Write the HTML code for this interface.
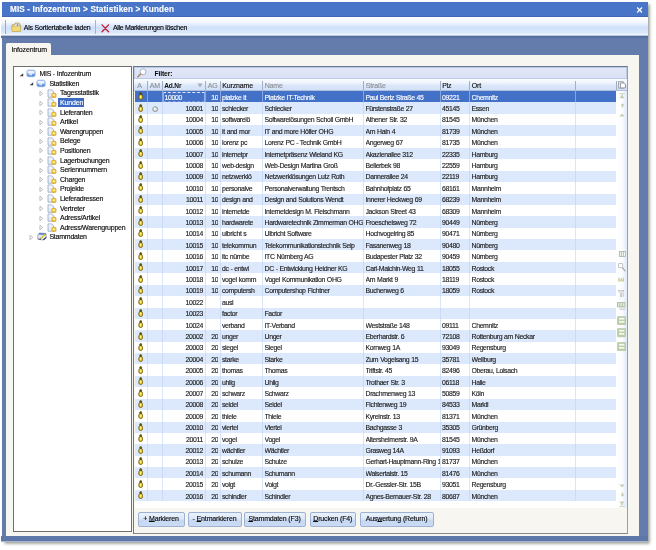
<!DOCTYPE html><html><head><meta charset="utf-8"><title>MIS</title><style>
*{box-sizing:border-box}
html,body{margin:0;padding:0}
body{width:656px;height:550px;background:#fff;overflow:hidden;position:relative;font-family:"Liberation Sans",sans-serif;font-size:7px;color:#0a0a0a;letter-spacing:-0.15px;-webkit-text-stroke-width:0.14px}
.abs{position:absolute}
#win{left:1.6px;top:2.2px;width:646.2px;height:539.6px;background:#637cac;box-shadow:2.2px 2.2px 3px rgba(70,75,60,.6)}
#title{left:1.6px;top:2.2px;width:646.2px;height:14.8px;background:#4875c8;border-bottom:0.6px solid #4068b8}
#title span{position:absolute;left:8.4px;top:2.6px;font-size:8.2px;font-weight:bold;color:#fff;letter-spacing:0.12px;white-space:nowrap;-webkit-text-stroke-width:0.12px}
#tb{left:1.4px;top:17px;width:646.2px;height:19.4px;background:linear-gradient(#fff 0%,#fcfdff 10%,#eff5fe 30%,#d0e0fa 56%,#d9e6fa 78%,#e4edfb 90%,#fff 94%,#fff 96%,#b9c5d9 97%,#b4c0d6 100%)}
#tbsh{left:1.4px;top:36.4px;width:646.4px;height:1.2px;background:#596f9f}
#tab{left:6.4px;top:42.7px;width:44.9px;height:13.4px;background:#f7f6f1;border-radius:1.5px 2px 0 0}
#panel{left:6.4px;top:55.3px;width:632.6px;height:480.6px;background:#f7f6f1}
#tree{left:13px;top:66px;width:119px;height:466px;background:#fff;border:1px solid #6e6e6e}
#grid{left:133px;top:66px;width:494.6px;height:468px;background:#f7f6f1;border:1px solid #6a7892;border-right-color:#8c9fc8;border-bottom-color:#86888c}
.t{position:absolute;white-space:nowrap;line-height:9px;height:9px}
.cell{position:absolute;white-space:nowrap;overflow:hidden;line-height:11px;height:11px;letter-spacing:-0.34px;word-spacing:0.3px;font-size:6.9px;color:#161616}
.r{text-align:right}
.tbt{color:#000;letter-spacing:-0.22px}
.btn{position:absolute;top:512.2px;height:14.7px;border:1px solid #9db1d2;border-radius:2px;background:linear-gradient(#eaf1fc 0%,#dce8f9 45%,#c6d8f3 58%,#cbdbf4 100%);text-align:center;line-height:12.7px;white-space:nowrap}
u{text-decoration-thickness:0.7px;text-underline-offset:0.3px}
</style></head><body>
<div id="root" style="position:absolute;left:0;top:0;width:656px;height:550px;will-change:transform">
<div id="win" class="abs"></div>
<div class="abs" style="left:1.4px;top:536px;width:646.4px;height:4.8px;background:#5e77a9"></div><div class="abs" style="left:1.4px;top:540.8px;width:646.4px;height:1px;background:#a7b5d2"></div>
<div id="title" class="abs"><span>MIS - Infozentrum &gt; Statistiken &gt; Kunden</span></div>
<svg class="abs" style="left:636px;top:6px" width="8" height="8" viewBox="0 0 8 8"><path d="M1.2 1.5 L6 6.5 M6 1.5 L1.2 6.5" stroke="#fff" stroke-width="1.25" fill="none"/></svg>
<div id="tb" class="abs"></div><div id="tbsh" class="abs"></div>
<div class="abs" style="left:5.2px;top:19.6px;width:1px;height:14.6px;background:#9ca8be"></div>
<svg class="abs" style="left:11.2px;top:21.8px" width="10.4" height="10.4" viewBox="0 0 11 11"><path d="M1 4 C1 3.2 1.4 2.8 2.2 2.8 L3.4 2.8 L4.4 1.2 L8.6 1.2 L9.4 2.8 C10 2.9 10.2 3.3 10.2 4 L10.2 9 C10.2 9.8 9.8 10.2 9 10.2 L2.2 10.2 C1.4 10.2 1 9.8 1 9 Z" fill="#efcf60" stroke="#a58a48" stroke-width="0.7"/><path d="M3.6 4.6 L4.6 1.8 L8.2 1.8 L8.8 4.6 Z" fill="#f6f6f2" stroke="#a8a8a0" stroke-width="0.5"/><rect x="6" y="2.4" width="1.6" height="1.8" fill="#8a8a86"/><path d="M1.4 5.4 H9.8 V9 C9.8 9.5 9.5 9.8 9 9.8 H2.2 C1.7 9.8 1.4 9.5 1.4 9 Z" fill="#f3d976"/></svg>
<div class="t tbt" style="left:23.8px;top:22.8px">Als Sortiertabelle laden</div>
<div class="abs" style="left:95.3px;top:20px;width:1px;height:14px;background:#aab4c8"></div>
<svg class="abs" style="left:100.5px;top:24px" width="9" height="8.6" viewBox="0 0 10 10"><path d="M1 1 L8.5 9 M8.5 1 L1 9" stroke="#c4203a" stroke-width="1.6" fill="none" stroke-linecap="round"/></svg>
<div class="t tbt" style="left:113px;top:22.8px;letter-spacing:-0.34px">Alle Markierungen löschen</div>
<div id="tab" class="abs"></div><div class="t" style="left:11.5px;top:44.6px">Infozentrum</div>
<div id="panel" class="abs"></div>
<div id="tree" class="abs"></div>
<svg class="abs" style="left:19.3px;top:71.7px" width="5" height="5" viewBox="0 0 5 5"><path d="M4.2 1.2 L4.2 4.2 L0.6 4.2 Z" fill="#3a3a3a"/></svg>
<svg class="abs" style="left:26.3px;top:69.2px" width="10" height="9" viewBox="0 0 10 9"><rect x="0.6" y="0.9" width="8.8" height="7" rx="2.2" fill="#9dbfee" stroke="#b9c6dc" stroke-width="0.7"/><rect x="1.6" y="2" width="6.8" height="2.4" rx="1.1" fill="#eef4fd"/><path d="M1.2 5.2 h7.6 v1 a1.6 1.6 0 0 1 -1.6 1.4 h-4.4 a1.6 1.6 0 0 1 -1.6 -1.4 Z" fill="#5d8fdc"/><rect x="3.2" y="4.6" width="3" height="1.6" rx="0.7" fill="#e6effc"/></svg>
<div class="t" style="left:39.4px;top:69.2px;letter-spacing:-0.23px">MIS - Infozentrum</div>
<svg class="abs" style="left:29.3px;top:81.3px" width="5" height="5" viewBox="0 0 5 5"><path d="M4.2 1.2 L4.2 4.2 L0.6 4.2 Z" fill="#3a3a3a"/></svg>
<svg class="abs" style="left:36.3px;top:78.79px" width="10" height="9" viewBox="0 0 10 9"><rect x="0.6" y="0.9" width="8.8" height="7" rx="2.2" fill="#9dbfee" stroke="#b9c6dc" stroke-width="0.7"/><rect x="1.6" y="2" width="6.8" height="2.4" rx="1.1" fill="#eef4fd"/><path d="M1.2 5.2 h7.6 v1 a1.6 1.6 0 0 1 -1.6 1.4 h-4.4 a1.6 1.6 0 0 1 -1.6 -1.4 Z" fill="#5d8fdc"/><rect x="3.2" y="4.6" width="3" height="1.6" rx="0.7" fill="#e6effc"/></svg>
<div class="t" style="left:49.4px;top:78.8px;letter-spacing:-0.23px">Statistiken</div>
<svg class="abs" style="left:39.0px;top:89.9px" width="5" height="7" viewBox="0 0 5 7"><path d="M0.9 1.3 L3.8 3.5 L0.9 5.7 Z" fill="#fff" stroke="#a8a0a6" stroke-width="0.7"/></svg>
<svg class="abs" style="left:46.9px;top:88.58px" width="10" height="9" viewBox="0 0 10 9"><path d="M1 0.9 L4.8 0.9 L6.8 2.9 L6.8 8.2 L1 8.2 Z" fill="#e4ecf7" stroke="#8f9db6" stroke-width="0.7"/><path d="M1.8 2 L4.4 2 M1.8 3.4 L5.4 3.4" stroke="#f8fbff" stroke-width="0.8"/><rect x="4.9" y="4.3" width="4.2" height="4.2" rx="0.9" fill="#eec23c" stroke="#c89a20" stroke-width="0.5"/><rect x="5.9" y="5.2" width="2" height="1.9" rx="0.7" fill="#fff6c8"/></svg>
<div class="t" style="left:60.0px;top:88.4px;letter-spacing:-0.23px">Tagesstatistik</div>
<svg class="abs" style="left:39.0px;top:99.5px" width="5" height="7" viewBox="0 0 5 7"><path d="M0.9 1.3 L3.8 3.5 L0.9 5.7 Z" fill="#fff" stroke="#a8a0a6" stroke-width="0.7"/></svg>
<svg class="abs" style="left:46.9px;top:98.17px" width="10" height="9" viewBox="0 0 10 9"><path d="M1 0.9 L4.8 0.9 L6.8 2.9 L6.8 8.2 L1 8.2 Z" fill="#e4ecf7" stroke="#8f9db6" stroke-width="0.7"/><path d="M1.8 2 L4.4 2 M1.8 3.4 L5.4 3.4" stroke="#f8fbff" stroke-width="0.8"/><rect x="4.9" y="4.3" width="4.2" height="4.2" rx="0.9" fill="#eec23c" stroke="#c89a20" stroke-width="0.5"/><rect x="5.9" y="5.2" width="2" height="1.9" rx="0.7" fill="#fff6c8"/></svg>
<div class="abs" style="left:58.4px;top:97.6px;width:25.4px;height:9.4px;background:#3c69c2"></div>
<div class="t" style="left:60.0px;top:98.0px;color:#fff">Kunden</div>
<svg class="abs" style="left:39.0px;top:109.1px" width="5" height="7" viewBox="0 0 5 7"><path d="M0.9 1.3 L3.8 3.5 L0.9 5.7 Z" fill="#fff" stroke="#a8a0a6" stroke-width="0.7"/></svg>
<svg class="abs" style="left:46.9px;top:107.76px" width="10" height="9" viewBox="0 0 10 9"><path d="M1 0.9 L4.8 0.9 L6.8 2.9 L6.8 8.2 L1 8.2 Z" fill="#e4ecf7" stroke="#8f9db6" stroke-width="0.7"/><path d="M1.8 2 L4.4 2 M1.8 3.4 L5.4 3.4" stroke="#f8fbff" stroke-width="0.8"/><rect x="4.9" y="4.3" width="4.2" height="4.2" rx="0.9" fill="#eec23c" stroke="#c89a20" stroke-width="0.5"/><rect x="5.9" y="5.2" width="2" height="1.9" rx="0.7" fill="#fff6c8"/></svg>
<div class="t" style="left:60.0px;top:107.6px;letter-spacing:-0.23px">Lieferanten</div>
<svg class="abs" style="left:39.0px;top:118.7px" width="5" height="7" viewBox="0 0 5 7"><path d="M0.9 1.3 L3.8 3.5 L0.9 5.7 Z" fill="#fff" stroke="#a8a0a6" stroke-width="0.7"/></svg>
<svg class="abs" style="left:46.9px;top:117.35000000000001px" width="10" height="9" viewBox="0 0 10 9"><path d="M1 0.9 L4.8 0.9 L6.8 2.9 L6.8 8.2 L1 8.2 Z" fill="#e4ecf7" stroke="#8f9db6" stroke-width="0.7"/><path d="M1.8 2 L4.4 2 M1.8 3.4 L5.4 3.4" stroke="#f8fbff" stroke-width="0.8"/><rect x="4.9" y="4.3" width="4.2" height="4.2" rx="0.9" fill="#eec23c" stroke="#c89a20" stroke-width="0.5"/><rect x="5.9" y="5.2" width="2" height="1.9" rx="0.7" fill="#fff6c8"/></svg>
<div class="t" style="left:60.0px;top:117.2px;letter-spacing:-0.23px">Artikel</div>
<svg class="abs" style="left:39.0px;top:128.2px" width="5" height="7" viewBox="0 0 5 7"><path d="M0.9 1.3 L3.8 3.5 L0.9 5.7 Z" fill="#fff" stroke="#a8a0a6" stroke-width="0.7"/></svg>
<svg class="abs" style="left:46.9px;top:126.94000000000001px" width="10" height="9" viewBox="0 0 10 9"><path d="M1 0.9 L4.8 0.9 L6.8 2.9 L6.8 8.2 L1 8.2 Z" fill="#e4ecf7" stroke="#8f9db6" stroke-width="0.7"/><path d="M1.8 2 L4.4 2 M1.8 3.4 L5.4 3.4" stroke="#f8fbff" stroke-width="0.8"/><rect x="4.9" y="4.3" width="4.2" height="4.2" rx="0.9" fill="#eec23c" stroke="#c89a20" stroke-width="0.5"/><rect x="5.9" y="5.2" width="2" height="1.9" rx="0.7" fill="#fff6c8"/></svg>
<div class="t" style="left:60.0px;top:126.7px;letter-spacing:-0.23px">Warengruppen</div>
<svg class="abs" style="left:39.0px;top:137.8px" width="5" height="7" viewBox="0 0 5 7"><path d="M0.9 1.3 L3.8 3.5 L0.9 5.7 Z" fill="#fff" stroke="#a8a0a6" stroke-width="0.7"/></svg>
<svg class="abs" style="left:46.9px;top:136.52999999999997px" width="10" height="9" viewBox="0 0 10 9"><path d="M1 0.9 L4.8 0.9 L6.8 2.9 L6.8 8.2 L1 8.2 Z" fill="#e4ecf7" stroke="#8f9db6" stroke-width="0.7"/><path d="M1.8 2 L4.4 2 M1.8 3.4 L5.4 3.4" stroke="#f8fbff" stroke-width="0.8"/><rect x="4.9" y="4.3" width="4.2" height="4.2" rx="0.9" fill="#eec23c" stroke="#c89a20" stroke-width="0.5"/><rect x="5.9" y="5.2" width="2" height="1.9" rx="0.7" fill="#fff6c8"/></svg>
<div class="t" style="left:60.0px;top:136.3px;letter-spacing:-0.23px">Belege</div>
<svg class="abs" style="left:39.0px;top:147.4px" width="5" height="7" viewBox="0 0 5 7"><path d="M0.9 1.3 L3.8 3.5 L0.9 5.7 Z" fill="#fff" stroke="#a8a0a6" stroke-width="0.7"/></svg>
<svg class="abs" style="left:46.9px;top:146.12px" width="10" height="9" viewBox="0 0 10 9"><path d="M1 0.9 L4.8 0.9 L6.8 2.9 L6.8 8.2 L1 8.2 Z" fill="#e4ecf7" stroke="#8f9db6" stroke-width="0.7"/><path d="M1.8 2 L4.4 2 M1.8 3.4 L5.4 3.4" stroke="#f8fbff" stroke-width="0.8"/><rect x="4.9" y="4.3" width="4.2" height="4.2" rx="0.9" fill="#eec23c" stroke="#c89a20" stroke-width="0.5"/><rect x="5.9" y="5.2" width="2" height="1.9" rx="0.7" fill="#fff6c8"/></svg>
<div class="t" style="left:60.0px;top:145.9px;letter-spacing:-0.23px">Positionen</div>
<svg class="abs" style="left:39.0px;top:157.0px" width="5" height="7" viewBox="0 0 5 7"><path d="M0.9 1.3 L3.8 3.5 L0.9 5.7 Z" fill="#fff" stroke="#a8a0a6" stroke-width="0.7"/></svg>
<svg class="abs" style="left:46.9px;top:155.70999999999998px" width="10" height="9" viewBox="0 0 10 9"><path d="M1 0.9 L4.8 0.9 L6.8 2.9 L6.8 8.2 L1 8.2 Z" fill="#e4ecf7" stroke="#8f9db6" stroke-width="0.7"/><path d="M1.8 2 L4.4 2 M1.8 3.4 L5.4 3.4" stroke="#f8fbff" stroke-width="0.8"/><rect x="4.9" y="4.3" width="4.2" height="4.2" rx="0.9" fill="#eec23c" stroke="#c89a20" stroke-width="0.5"/><rect x="5.9" y="5.2" width="2" height="1.9" rx="0.7" fill="#fff6c8"/></svg>
<div class="t" style="left:60.0px;top:155.5px;letter-spacing:-0.23px">Lagerbuchungen</div>
<svg class="abs" style="left:39.0px;top:166.6px" width="5" height="7" viewBox="0 0 5 7"><path d="M0.9 1.3 L3.8 3.5 L0.9 5.7 Z" fill="#fff" stroke="#a8a0a6" stroke-width="0.7"/></svg>
<svg class="abs" style="left:46.9px;top:165.3px" width="10" height="9" viewBox="0 0 10 9"><path d="M1 0.9 L4.8 0.9 L6.8 2.9 L6.8 8.2 L1 8.2 Z" fill="#e4ecf7" stroke="#8f9db6" stroke-width="0.7"/><path d="M1.8 2 L4.4 2 M1.8 3.4 L5.4 3.4" stroke="#f8fbff" stroke-width="0.8"/><rect x="4.9" y="4.3" width="4.2" height="4.2" rx="0.9" fill="#eec23c" stroke="#c89a20" stroke-width="0.5"/><rect x="5.9" y="5.2" width="2" height="1.9" rx="0.7" fill="#fff6c8"/></svg>
<div class="t" style="left:60.0px;top:165.1px;letter-spacing:-0.23px">Seriennummern</div>
<svg class="abs" style="left:39.0px;top:176.2px" width="5" height="7" viewBox="0 0 5 7"><path d="M0.9 1.3 L3.8 3.5 L0.9 5.7 Z" fill="#fff" stroke="#a8a0a6" stroke-width="0.7"/></svg>
<svg class="abs" style="left:46.9px;top:174.89px" width="10" height="9" viewBox="0 0 10 9"><path d="M1 0.9 L4.8 0.9 L6.8 2.9 L6.8 8.2 L1 8.2 Z" fill="#e4ecf7" stroke="#8f9db6" stroke-width="0.7"/><path d="M1.8 2 L4.4 2 M1.8 3.4 L5.4 3.4" stroke="#f8fbff" stroke-width="0.8"/><rect x="4.9" y="4.3" width="4.2" height="4.2" rx="0.9" fill="#eec23c" stroke="#c89a20" stroke-width="0.5"/><rect x="5.9" y="5.2" width="2" height="1.9" rx="0.7" fill="#fff6c8"/></svg>
<div class="t" style="left:60.0px;top:174.7px;letter-spacing:-0.23px">Chargen</div>
<svg class="abs" style="left:39.0px;top:185.8px" width="5" height="7" viewBox="0 0 5 7"><path d="M0.9 1.3 L3.8 3.5 L0.9 5.7 Z" fill="#fff" stroke="#a8a0a6" stroke-width="0.7"/></svg>
<svg class="abs" style="left:46.9px;top:184.48px" width="10" height="9" viewBox="0 0 10 9"><path d="M1 0.9 L4.8 0.9 L6.8 2.9 L6.8 8.2 L1 8.2 Z" fill="#e4ecf7" stroke="#8f9db6" stroke-width="0.7"/><path d="M1.8 2 L4.4 2 M1.8 3.4 L5.4 3.4" stroke="#f8fbff" stroke-width="0.8"/><rect x="4.9" y="4.3" width="4.2" height="4.2" rx="0.9" fill="#eec23c" stroke="#c89a20" stroke-width="0.5"/><rect x="5.9" y="5.2" width="2" height="1.9" rx="0.7" fill="#fff6c8"/></svg>
<div class="t" style="left:60.0px;top:184.3px;letter-spacing:-0.23px">Projekte</div>
<svg class="abs" style="left:39.0px;top:195.4px" width="5" height="7" viewBox="0 0 5 7"><path d="M0.9 1.3 L3.8 3.5 L0.9 5.7 Z" fill="#fff" stroke="#a8a0a6" stroke-width="0.7"/></svg>
<svg class="abs" style="left:46.9px;top:194.07px" width="10" height="9" viewBox="0 0 10 9"><path d="M1 0.9 L4.8 0.9 L6.8 2.9 L6.8 8.2 L1 8.2 Z" fill="#e4ecf7" stroke="#8f9db6" stroke-width="0.7"/><path d="M1.8 2 L4.4 2 M1.8 3.4 L5.4 3.4" stroke="#f8fbff" stroke-width="0.8"/><rect x="4.9" y="4.3" width="4.2" height="4.2" rx="0.9" fill="#eec23c" stroke="#c89a20" stroke-width="0.5"/><rect x="5.9" y="5.2" width="2" height="1.9" rx="0.7" fill="#fff6c8"/></svg>
<div class="t" style="left:60.0px;top:193.9px;letter-spacing:-0.23px">Lieferadressen</div>
<svg class="abs" style="left:39.0px;top:205.0px" width="5" height="7" viewBox="0 0 5 7"><path d="M0.9 1.3 L3.8 3.5 L0.9 5.7 Z" fill="#fff" stroke="#a8a0a6" stroke-width="0.7"/></svg>
<svg class="abs" style="left:46.9px;top:203.65999999999997px" width="10" height="9" viewBox="0 0 10 9"><path d="M1 0.9 L4.8 0.9 L6.8 2.9 L6.8 8.2 L1 8.2 Z" fill="#e4ecf7" stroke="#8f9db6" stroke-width="0.7"/><path d="M1.8 2 L4.4 2 M1.8 3.4 L5.4 3.4" stroke="#f8fbff" stroke-width="0.8"/><rect x="4.9" y="4.3" width="4.2" height="4.2" rx="0.9" fill="#eec23c" stroke="#c89a20" stroke-width="0.5"/><rect x="5.9" y="5.2" width="2" height="1.9" rx="0.7" fill="#fff6c8"/></svg>
<div class="t" style="left:60.0px;top:203.5px;letter-spacing:-0.23px">Vertreter</div>
<svg class="abs" style="left:39.0px;top:214.6px" width="5" height="7" viewBox="0 0 5 7"><path d="M0.9 1.3 L3.8 3.5 L0.9 5.7 Z" fill="#fff" stroke="#a8a0a6" stroke-width="0.7"/></svg>
<svg class="abs" style="left:46.9px;top:213.25px" width="10" height="9" viewBox="0 0 10 9"><path d="M1 0.9 L4.8 0.9 L6.8 2.9 L6.8 8.2 L1 8.2 Z" fill="#e4ecf7" stroke="#8f9db6" stroke-width="0.7"/><path d="M1.8 2 L4.4 2 M1.8 3.4 L5.4 3.4" stroke="#f8fbff" stroke-width="0.8"/><rect x="4.9" y="4.3" width="4.2" height="4.2" rx="0.9" fill="#eec23c" stroke="#c89a20" stroke-width="0.5"/><rect x="5.9" y="5.2" width="2" height="1.9" rx="0.7" fill="#fff6c8"/></svg>
<div class="t" style="left:60.0px;top:213.1px;letter-spacing:-0.23px">Adress/Artikel</div>
<svg class="abs" style="left:39.0px;top:224.1px" width="5" height="7" viewBox="0 0 5 7"><path d="M0.9 1.3 L3.8 3.5 L0.9 5.7 Z" fill="#fff" stroke="#a8a0a6" stroke-width="0.7"/></svg>
<svg class="abs" style="left:46.9px;top:222.83999999999997px" width="10" height="9" viewBox="0 0 10 9"><path d="M1 0.9 L4.8 0.9 L6.8 2.9 L6.8 8.2 L1 8.2 Z" fill="#e4ecf7" stroke="#8f9db6" stroke-width="0.7"/><path d="M1.8 2 L4.4 2 M1.8 3.4 L5.4 3.4" stroke="#f8fbff" stroke-width="0.8"/><rect x="4.9" y="4.3" width="4.2" height="4.2" rx="0.9" fill="#eec23c" stroke="#c89a20" stroke-width="0.5"/><rect x="5.9" y="5.2" width="2" height="1.9" rx="0.7" fill="#fff6c8"/></svg>
<div class="t" style="left:60.0px;top:222.6px;letter-spacing:-0.23px">Adress/Warengruppen</div>
<svg class="abs" style="left:29.0px;top:233.7px" width="5" height="7" viewBox="0 0 5 7"><path d="M0.9 1.3 L3.8 3.5 L0.9 5.7 Z" fill="#fff" stroke="#a8a0a6" stroke-width="0.7"/></svg>
<svg class="abs" style="left:36.699999999999996px;top:232.23000000000002px" width="10" height="9" viewBox="0 0 10 9"><path d="M2.4 1 L9 1.4 L9.4 5.6 L7 8 L0.8 7.4 L0.6 3.4 Z" fill="#dfe6f6" stroke="#7a86b0" stroke-width="0.6"/><path d="M2.4 1 L9 1.4 L8.6 3 L1.4 2.6 Z" fill="#5878d0"/><path d="M0.8 5.6 L3.4 7.6 L0.8 7.4Z" fill="#a9a0e0"/><path d="M3.4 6.8 L7.8 2.6" stroke="#e6cf20" stroke-width="1.5"/><path d="M2.6 7.6 L3.6 6.6" stroke="#303030" stroke-width="1.2"/><path d="M6.4 7.9 L9.2 5.4" stroke="#27324e" stroke-width="1.1"/></svg>
<div class="t" style="left:49.4px;top:232.2px;letter-spacing:-0.23px">Stammdaten</div>
<div id="grid" class="abs"></div>
<div class="abs" style="left:134px;top:67px;width:492.6px;height:11.6px;background:linear-gradient(#e2e8f7,#d9e1f4);border:1px solid #bccae6"></div>
<svg class="abs" style="left:136.5px;top:68px" width="10" height="10" viewBox="0 0 10 10"><circle cx="6" cy="3.8" r="3" fill="#fff" stroke="#98a8c8" stroke-width="0.9"/><path d="M3.6 6 L1 8.8" stroke="#b08860" stroke-width="1.6" stroke-linecap="round"/></svg>
<div class="t" style="left:154.5px;top:68.5px;font-weight:bold;font-size:6.8px;-webkit-text-stroke-width:0">Filter:</div>
<div class="abs" style="left:134px;top:78.6px;width:492.6px;height:12.6px;background:linear-gradient(#fbfdff 0%,#eef4fd 35%,#dae6f9 60%,#d3e1f8 100%);border-bottom:0.8px solid #aebfdc"></div>
<div class="t" style="left:137.2px;top:80.9px;color:#8d9199;font-weight:normal">A</div>
<div class="abs" style="left:147.0px;top:80.5px;width:1px;height:9px;background:#a3aec4"></div>
<div class="t" style="left:149.7px;top:80.9px;color:#8d9199;font-weight:normal">AM</div>
<div class="abs" style="left:161.5px;top:80.5px;width:1px;height:9px;background:#a3aec4"></div>
<div class="t" style="left:164.2px;top:80.9px;color:#101010;font-weight:bold;font-size:6.6px;-webkit-text-stroke-width:0">Ad.Nr</div>
<div class="abs" style="left:205.0px;top:80.5px;width:1px;height:9px;background:#a3aec4"></div>
<div class="t" style="left:207.7px;top:80.9px;color:#8d9199;font-weight:normal">AG</div>
<div class="abs" style="left:219.5px;top:80.5px;width:1px;height:9px;background:#a3aec4"></div>
<div class="t" style="left:222.2px;top:80.9px;color:#101010;font-weight:normal">Kurzname</div>
<div class="abs" style="left:262.0px;top:80.5px;width:1px;height:9px;background:#a3aec4"></div>
<div class="t" style="left:264.7px;top:80.9px;color:#8d9199;font-weight:normal">Name</div>
<div class="abs" style="left:363.0px;top:80.5px;width:1px;height:9px;background:#a3aec4"></div>
<div class="t" style="left:365.7px;top:80.9px;color:#8d9199;font-weight:normal">Straße</div>
<div class="abs" style="left:439.5px;top:80.5px;width:1px;height:9px;background:#a3aec4"></div>
<div class="t" style="left:442.2px;top:80.9px;color:#101010;font-weight:normal">Plz</div>
<div class="abs" style="left:469.0px;top:80.5px;width:1px;height:9px;background:#a3aec4"></div>
<div class="t" style="left:471.7px;top:80.9px;color:#101010;font-weight:normal">Ort</div>
<div class="abs" style="left:574.5px;top:80.5px;width:1px;height:9px;background:#a3aec4"></div>
<div class="t" style="left:577.2px;top:80.9px;color:#101010;font-weight:normal"></div>
<div class="abs" style="left:615.5px;top:80.5px;width:1px;height:9px;background:#a3aec4"></div>
<svg class="abs" style="left:197px;top:83px" width="6" height="5" viewBox="0 0 6 5"><path d="M0.3 0.5 L5.7 0.5 L3 4.6 Z" fill="#a8aeb8"/></svg>
<svg class="abs" style="left:617.6px;top:81.2px" width="8.2" height="8.2" viewBox="0 0 9 9"><rect x="0.5" y="0.8" width="5.2" height="7" fill="#f1f3f6" stroke="#8a9098" stroke-width="0.8"/><path d="M2.6 2.2 H6.4 L8.2 3.8 V7.6 H2.6 Z" fill="#fff" stroke="#6e747c" stroke-width="0.8"/></svg>
<div class="abs" style="left:134.5px;top:90.5px;width:482.1px;height:417.5px;background:#fff"></div>
<div class="abs" style="left:134.5px;top:90.90px;width:482.5px;height:11.40px;background:#4371c8"></div>
<div class="abs" style="left:162.6px;top:91.50px;width:42.5px;height:10.50px;border-top:0.8px dashed rgba(240,246,255,.9);border-left:0.6px solid rgba(220,232,255,.55);border-right:0.6px solid rgba(220,232,255,.55);border-bottom:0.6px dashed rgba(220,232,255,.35)"></div>
<div class="abs" style="left:134.5px;top:102.30px;width:482.5px;height:11.40px;background:#dce8fb"></div>
<div class="abs" style="left:134.5px;top:113.70px;width:482.5px;height:11.40px;background:#fff"></div>
<div class="abs" style="left:134.5px;top:125.10px;width:482.5px;height:11.40px;background:#dce8fb"></div>
<div class="abs" style="left:134.5px;top:136.50px;width:482.5px;height:11.40px;background:#fff"></div>
<div class="abs" style="left:134.5px;top:147.90px;width:482.5px;height:11.40px;background:#dce8fb"></div>
<div class="abs" style="left:134.5px;top:159.30px;width:482.5px;height:11.40px;background:#fff"></div>
<div class="abs" style="left:134.5px;top:170.70px;width:482.5px;height:11.40px;background:#dce8fb"></div>
<div class="abs" style="left:134.5px;top:182.10px;width:482.5px;height:11.40px;background:#fff"></div>
<div class="abs" style="left:134.5px;top:193.50px;width:482.5px;height:11.40px;background:#dce8fb"></div>
<div class="abs" style="left:134.5px;top:204.90px;width:482.5px;height:11.40px;background:#fff"></div>
<div class="abs" style="left:134.5px;top:216.30px;width:482.5px;height:11.40px;background:#dce8fb"></div>
<div class="abs" style="left:134.5px;top:227.70px;width:482.5px;height:11.40px;background:#fff"></div>
<div class="abs" style="left:134.5px;top:239.10px;width:482.5px;height:11.40px;background:#dce8fb"></div>
<div class="abs" style="left:134.5px;top:250.50px;width:482.5px;height:11.40px;background:#fff"></div>
<div class="abs" style="left:134.5px;top:261.90px;width:482.5px;height:11.40px;background:#dce8fb"></div>
<div class="abs" style="left:134.5px;top:273.30px;width:482.5px;height:11.40px;background:#fff"></div>
<div class="abs" style="left:134.5px;top:284.70px;width:482.5px;height:11.40px;background:#dce8fb"></div>
<div class="abs" style="left:134.5px;top:296.10px;width:482.5px;height:11.40px;background:#fff"></div>
<div class="abs" style="left:134.5px;top:307.50px;width:482.5px;height:11.40px;background:#dce8fb"></div>
<div class="abs" style="left:134.5px;top:318.90px;width:482.5px;height:11.40px;background:#fff"></div>
<div class="abs" style="left:134.5px;top:330.30px;width:482.5px;height:11.40px;background:#dce8fb"></div>
<div class="abs" style="left:134.5px;top:341.70px;width:482.5px;height:11.40px;background:#fff"></div>
<div class="abs" style="left:134.5px;top:353.10px;width:482.5px;height:11.40px;background:#dce8fb"></div>
<div class="abs" style="left:134.5px;top:364.50px;width:482.5px;height:11.40px;background:#fff"></div>
<div class="abs" style="left:134.5px;top:375.90px;width:482.5px;height:11.40px;background:#dce8fb"></div>
<div class="abs" style="left:134.5px;top:387.30px;width:482.5px;height:11.40px;background:#fff"></div>
<div class="abs" style="left:134.5px;top:398.70px;width:482.5px;height:11.40px;background:#dce8fb"></div>
<div class="abs" style="left:134.5px;top:410.10px;width:482.5px;height:11.40px;background:#fff"></div>
<div class="abs" style="left:134.5px;top:421.50px;width:482.5px;height:11.40px;background:#dce8fb"></div>
<div class="abs" style="left:134.5px;top:432.90px;width:482.5px;height:11.40px;background:#fff"></div>
<div class="abs" style="left:134.5px;top:444.30px;width:482.5px;height:11.40px;background:#dce8fb"></div>
<div class="abs" style="left:134.5px;top:455.70px;width:482.5px;height:11.40px;background:#fff"></div>
<div class="abs" style="left:134.5px;top:467.10px;width:482.5px;height:11.40px;background:#dce8fb"></div>
<div class="abs" style="left:134.5px;top:478.50px;width:482.5px;height:11.40px;background:#fff"></div>
<div class="abs" style="left:134.5px;top:489.90px;width:482.5px;height:11.40px;background:#dce8fb"></div>
<div class="abs" style="left:616px;top:90.5px;width:10.6px;height:417px;background:linear-gradient(90deg,#fff 0%,#fbfcff 55%,#dfe9fa 100%)"></div>
<svg class="abs" style="left:619px;top:92.5px" width="6" height="6" viewBox="0 0 6 6"><rect x="0.3" y="0.2" width="5.4" height="0.9" fill="#c3d0b3"/><path d="M0.3 5.2 L3 2 L5.7 5.2 Z" fill="#c3d0b3"/><path d="M1.4 2.6 L3 1.2 L4.6 2.6Z" fill="#c3d0b3"/></svg>
<svg class="abs" style="left:619.5px;top:102.8px" width="5" height="5" viewBox="0 0 5 5"><path d="M2.5 0.2 L4.8 2.4 L3.2 2.4 L3.2 4.4 L1.8 4.4 L1.8 2.4 L0.2 2.4 Z" fill="#c3d0b3"/></svg>
<svg class="abs" style="left:619px;top:112.5px" width="6" height="4" viewBox="0 0 6 4"><path d="M0.3 3.4 L3 0.4 L5.7 3.4 Z" fill="#c3d0b3"/></svg>
<svg class="abs" style="left:619.3px;top:484px" width="6" height="4" viewBox="0 0 6 4"><path d="M0.3 0.4 L3 3.4 L5.7 0.4 Z" fill="#c3d0b3"/></svg>
<svg class="abs" style="left:619.7px;top:492.3px" width="5" height="5" viewBox="0 0 5 5"><path d="M2.5 4.8 L4.8 2.6 L3.2 2.6 L3.2 0.6 L1.8 0.6 L1.8 2.6 L0.2 2.6 Z" fill="#c3d0b3"/></svg>
<svg class="abs" style="left:619.3px;top:501px" width="6" height="6" viewBox="0 0 6 6"><rect x="0.3" y="4.9" width="5.4" height="0.9" fill="#c3d0b3"/><path d="M0.3 0.6 L3 3.8 L5.7 0.6 Z" fill="#c3d0b3"/><path d="M1.4 3.2 L3 4.6 L4.6 3.2Z" fill="#c3d0b3"/></svg>
<svg class="abs" style="left:619px;top:250.8px" width="7" height="6" viewBox="0 0 7 6"><rect x="0.4" y="0.4" width="6" height="5" fill="#f4f7f0" stroke="#a9b6a0" stroke-width="0.8"/><path d="M2.4 0.4 V5.4 M4.4 0.4 V5.4" stroke="#a9b6a0" stroke-width="0.8"/></svg>
<svg class="abs" style="left:618.4px;top:263px" width="8" height="9" viewBox="0 0 8 9"><rect x="0.5" y="0.5" width="4.2" height="4.2" rx="0.6" fill="#fdfdfd" stroke="#aeb4bc" stroke-width="0.8"/><path d="M4.6 4.8 L7 7.8" stroke="#a7a9a2" stroke-width="1.3" stroke-linecap="round"/></svg>
<svg class="abs" style="left:618.2px;top:277.4px" width="7" height="5" viewBox="0 0 7 5"><rect x="0.3" y="2.2" width="5.6" height="2.4" fill="#dcdcb4"/><rect x="0.3" y="0.4" width="1.2" height="4" fill="#c9cfa4"/><rect x="3" y="0.8" width="1" height="3" fill="#c9cfa4"/><rect x="5" y="0.4" width="1" height="4" fill="#c9cfa4"/></svg>
<svg class="abs" style="left:618px;top:289.8px" width="7" height="8" viewBox="0 0 7 8"><path d="M0.3 0.6 L6 0.6 L3.7 3.4 L3.7 6.8 L2.6 6.8 L2.6 3.4 Z" fill="#f2f2f2" stroke="#a9adb0" stroke-width="0.7"/><path d="M5.4 3 V6.8" stroke="#b9bdc0" stroke-width="0.7"/></svg>
<svg class="abs" style="left:617px;top:302.4px" width="9" height="10" viewBox="0 0 9 10"><rect x="0.4" y="0.6" width="7.6" height="4.2" fill="#dfe8d6" stroke="#a9b99c" stroke-width="0.8"/><path d="M2.8 0.8 V4.6 M5.4 0.8 V4.6" stroke="#a9b99c" stroke-width="0.7"/><path d="M2 6 H8.4 M2.6 7.6 H8" stroke="#c4c8cc" stroke-width="0.8"/></svg>
<svg class="abs" style="left:617px;top:315.6px" width="9" height="9.4" viewBox="0 0 9 9.4"><rect x="0.4" y="0.4" width="8.4" height="8.4" rx="0.8" fill="#bccdaa" stroke="#aebf9c" stroke-width="0.6"/><rect x="2" y="1.9" width="5.4" height="1.7" fill="#f4f8ee"/><rect x="2" y="5" width="5.4" height="1.7" fill="#f4f8ee"/></svg>
<svg class="abs" style="left:617px;top:328.4px" width="9" height="9.4" viewBox="0 0 9 9.4"><rect x="0.4" y="0.4" width="8.4" height="8.4" rx="0.8" fill="#bccdaa" stroke="#aebf9c" stroke-width="0.6"/><rect x="2" y="1.9" width="5.4" height="1.7" fill="#f4f8ee"/><rect x="2" y="5" width="5.4" height="1.7" fill="#f4f8ee"/></svg>
<svg class="abs" style="left:617px;top:341.6px" width="9" height="9.4" viewBox="0 0 9 9.4"><rect x="0.4" y="0.4" width="8.4" height="8.4" rx="0.8" fill="#bccdaa" stroke="#aebf9c" stroke-width="0.6"/><rect x="2" y="1.9" width="5.4" height="1.7" fill="#f4f8ee"/><rect x="2" y="5" width="5.4" height="1.7" fill="#f4f8ee"/></svg>
<div class="abs" style="left:147.0px;top:90.5px;width:1px;height:410.4px;background:rgba(190,208,240,.55)"></div>
<div class="abs" style="left:161.5px;top:90.5px;width:1px;height:410.4px;background:rgba(190,208,240,.55)"></div>
<div class="abs" style="left:205.0px;top:90.5px;width:1px;height:410.4px;background:rgba(190,208,240,.55)"></div>
<div class="abs" style="left:219.5px;top:90.5px;width:1px;height:410.4px;background:rgba(190,208,240,.55)"></div>
<div class="abs" style="left:262.0px;top:90.5px;width:1px;height:410.4px;background:rgba(190,208,240,.55)"></div>
<div class="abs" style="left:363.0px;top:90.5px;width:1px;height:410.4px;background:rgba(190,208,240,.55)"></div>
<div class="abs" style="left:439.5px;top:90.5px;width:1px;height:410.4px;background:rgba(190,208,240,.55)"></div>
<div class="abs" style="left:469.0px;top:90.5px;width:1px;height:410.4px;background:rgba(190,208,240,.55)"></div>
<div class="abs" style="left:574.5px;top:90.5px;width:1px;height:410.4px;background:rgba(190,208,240,.55)"></div>
<svg class="abs" style="left:137.8px;top:92.2px" width="5.4" height="8.1" viewBox="0 0 6 9"><path d="M3 2.4 C4.6 2.6 5.2 4.2 5.2 5.8 C5.2 7.4 4.4 8.4 3 8.4 C1.6 8.4 0.8 7.4 0.8 5.8 C0.8 4.2 1.4 2.6 3 2.4 Z" fill="#ecb800" stroke="#4a3a00" stroke-width="0.7"/><path d="M3 0.5 C3.9 0.5 4.3 1.2 4.2 2 L3.9 2.9 L2.1 2.9 L1.8 2 C1.7 1.2 2.1 0.5 3 0.5 Z" fill="#6e5c08" stroke="#2a2600" stroke-width="0.45"/><ellipse cx="3" cy="5.4" rx="0.9" ry="1.7" fill="#fff27a"/></svg>
<div class="cell" style="left:164.5px;top:91.50px;width:40px;color:#fff">10000</div>
<div class="cell r" style="left:206px;top:91.50px;width:12.2px;color:#fff">10</div>
<div class="cell" style="left:222px;top:91.50px;width:40px;color:#fff">platzke it</div>
<div class="cell" style="left:264.5px;top:91.50px;width:98.5px;color:#fff">Platzke IT-Technik</div>
<div class="cell" style="left:365.5px;top:91.50px;width:74px;color:#fff">Paul Bertz Straße 45</div>
<div class="cell" style="left:442px;top:91.50px;width:27px;color:#fff">09221</div>
<div class="cell" style="left:471.5px;top:91.50px;width:103px;color:#fff">Chemnitz</div>
<svg class="abs" style="left:137.8px;top:103.6px" width="5.4" height="8.1" viewBox="0 0 6 9"><path d="M3 2.4 C4.6 2.6 5.2 4.2 5.2 5.8 C5.2 7.4 4.4 8.4 3 8.4 C1.6 8.4 0.8 7.4 0.8 5.8 C0.8 4.2 1.4 2.6 3 2.4 Z" fill="#ecb800" stroke="#4a3a00" stroke-width="0.7"/><path d="M3 0.5 C3.9 0.5 4.3 1.2 4.2 2 L3.9 2.9 L2.1 2.9 L1.8 2 C1.7 1.2 2.1 0.5 3 0.5 Z" fill="#6e5c08" stroke="#2a2600" stroke-width="0.45"/><ellipse cx="3" cy="5.4" rx="0.9" ry="1.7" fill="#fff27a"/></svg>
<svg class="abs" style="left:151.9px;top:106.0px" width="6.4" height="6.4" viewBox="0 0 7 7"><circle cx="3.5" cy="3.5" r="2.7" fill="#d8d8d8" stroke="#8c8c8c" stroke-width="0.9"/><circle cx="3.1" cy="3.1" r="1.2" fill="#fafafa"/></svg>
<div class="cell r" style="left:163px;top:102.90px;width:39.9px;color:#1c1c1c">10001</div>
<div class="cell r" style="left:206px;top:102.90px;width:12.2px;color:#1c1c1c">10</div>
<div class="cell" style="left:222px;top:102.90px;width:40px;color:#1c1c1c">schlecker</div>
<div class="cell" style="left:264.5px;top:102.90px;width:98.5px;color:#1c1c1c">Schlecker</div>
<div class="cell" style="left:365.5px;top:102.90px;width:74px;color:#1c1c1c">Fürstenstraße 27</div>
<div class="cell" style="left:442px;top:102.90px;width:27px;color:#1c1c1c">45145</div>
<div class="cell" style="left:471.5px;top:102.90px;width:103px;color:#1c1c1c">Essen</div>
<svg class="abs" style="left:137.8px;top:115.0px" width="5.4" height="8.1" viewBox="0 0 6 9"><path d="M3 2.4 C4.6 2.6 5.2 4.2 5.2 5.8 C5.2 7.4 4.4 8.4 3 8.4 C1.6 8.4 0.8 7.4 0.8 5.8 C0.8 4.2 1.4 2.6 3 2.4 Z" fill="#ecb800" stroke="#4a3a00" stroke-width="0.7"/><path d="M3 0.5 C3.9 0.5 4.3 1.2 4.2 2 L3.9 2.9 L2.1 2.9 L1.8 2 C1.7 1.2 2.1 0.5 3 0.5 Z" fill="#6e5c08" stroke="#2a2600" stroke-width="0.45"/><ellipse cx="3" cy="5.4" rx="0.9" ry="1.7" fill="#fff27a"/></svg>
<div class="cell r" style="left:163px;top:114.30px;width:39.9px;color:#1c1c1c">10004</div>
<div class="cell r" style="left:206px;top:114.30px;width:12.2px;color:#1c1c1c">10</div>
<div class="cell" style="left:222px;top:114.30px;width:40px;color:#1c1c1c">softwarelö</div>
<div class="cell" style="left:264.5px;top:114.30px;width:98.5px;color:#1c1c1c">Softwarelösungen Scholl GmbH</div>
<div class="cell" style="left:365.5px;top:114.30px;width:74px;color:#1c1c1c">Athener Str. 32</div>
<div class="cell" style="left:442px;top:114.30px;width:27px;color:#1c1c1c">81545</div>
<div class="cell" style="left:471.5px;top:114.30px;width:103px;color:#1c1c1c">München</div>
<svg class="abs" style="left:137.8px;top:126.4px" width="5.4" height="8.1" viewBox="0 0 6 9"><path d="M3 2.4 C4.6 2.6 5.2 4.2 5.2 5.8 C5.2 7.4 4.4 8.4 3 8.4 C1.6 8.4 0.8 7.4 0.8 5.8 C0.8 4.2 1.4 2.6 3 2.4 Z" fill="#ecb800" stroke="#4a3a00" stroke-width="0.7"/><path d="M3 0.5 C3.9 0.5 4.3 1.2 4.2 2 L3.9 2.9 L2.1 2.9 L1.8 2 C1.7 1.2 2.1 0.5 3 0.5 Z" fill="#6e5c08" stroke="#2a2600" stroke-width="0.45"/><ellipse cx="3" cy="5.4" rx="0.9" ry="1.7" fill="#fff27a"/></svg>
<div class="cell r" style="left:163px;top:125.70px;width:39.9px;color:#1c1c1c">10005</div>
<div class="cell r" style="left:206px;top:125.70px;width:12.2px;color:#1c1c1c">10</div>
<div class="cell" style="left:222px;top:125.70px;width:40px;color:#1c1c1c">it and mor</div>
<div class="cell" style="left:264.5px;top:125.70px;width:98.5px;color:#1c1c1c">IT and more Höfler OHG</div>
<div class="cell" style="left:365.5px;top:125.70px;width:74px;color:#1c1c1c">Am Hain 4</div>
<div class="cell" style="left:442px;top:125.70px;width:27px;color:#1c1c1c">81739</div>
<div class="cell" style="left:471.5px;top:125.70px;width:103px;color:#1c1c1c">München</div>
<svg class="abs" style="left:137.8px;top:137.8px" width="5.4" height="8.1" viewBox="0 0 6 9"><path d="M3 2.4 C4.6 2.6 5.2 4.2 5.2 5.8 C5.2 7.4 4.4 8.4 3 8.4 C1.6 8.4 0.8 7.4 0.8 5.8 C0.8 4.2 1.4 2.6 3 2.4 Z" fill="#ecb800" stroke="#4a3a00" stroke-width="0.7"/><path d="M3 0.5 C3.9 0.5 4.3 1.2 4.2 2 L3.9 2.9 L2.1 2.9 L1.8 2 C1.7 1.2 2.1 0.5 3 0.5 Z" fill="#6e5c08" stroke="#2a2600" stroke-width="0.45"/><ellipse cx="3" cy="5.4" rx="0.9" ry="1.7" fill="#fff27a"/></svg>
<div class="cell r" style="left:163px;top:137.10px;width:39.9px;color:#1c1c1c">10006</div>
<div class="cell r" style="left:206px;top:137.10px;width:12.2px;color:#1c1c1c">10</div>
<div class="cell" style="left:222px;top:137.10px;width:40px;color:#1c1c1c">lorenz pc</div>
<div class="cell" style="left:264.5px;top:137.10px;width:98.5px;color:#1c1c1c">Lorenz PC - Technik GmbH</div>
<div class="cell" style="left:365.5px;top:137.10px;width:74px;color:#1c1c1c">Angerweg 67</div>
<div class="cell" style="left:442px;top:137.10px;width:27px;color:#1c1c1c">81735</div>
<div class="cell" style="left:471.5px;top:137.10px;width:103px;color:#1c1c1c">München</div>
<svg class="abs" style="left:137.8px;top:149.2px" width="5.4" height="8.1" viewBox="0 0 6 9"><path d="M3 2.4 C4.6 2.6 5.2 4.2 5.2 5.8 C5.2 7.4 4.4 8.4 3 8.4 C1.6 8.4 0.8 7.4 0.8 5.8 C0.8 4.2 1.4 2.6 3 2.4 Z" fill="#ecb800" stroke="#4a3a00" stroke-width="0.7"/><path d="M3 0.5 C3.9 0.5 4.3 1.2 4.2 2 L3.9 2.9 L2.1 2.9 L1.8 2 C1.7 1.2 2.1 0.5 3 0.5 Z" fill="#6e5c08" stroke="#2a2600" stroke-width="0.45"/><ellipse cx="3" cy="5.4" rx="0.9" ry="1.7" fill="#fff27a"/></svg>
<div class="cell r" style="left:163px;top:148.50px;width:39.9px;color:#1c1c1c">10007</div>
<div class="cell r" style="left:206px;top:148.50px;width:12.2px;color:#1c1c1c">10</div>
<div class="cell" style="left:222px;top:148.50px;width:40px;color:#1c1c1c">internetpr</div>
<div class="cell" style="left:264.5px;top:148.50px;width:98.5px;color:#1c1c1c">Internetpräsenz Wieland KG</div>
<div class="cell" style="left:365.5px;top:148.50px;width:74px;color:#1c1c1c">Akazienallee 312</div>
<div class="cell" style="left:442px;top:148.50px;width:27px;color:#1c1c1c">22335</div>
<div class="cell" style="left:471.5px;top:148.50px;width:103px;color:#1c1c1c">Hamburg</div>
<svg class="abs" style="left:137.8px;top:160.6px" width="5.4" height="8.1" viewBox="0 0 6 9"><path d="M3 2.4 C4.6 2.6 5.2 4.2 5.2 5.8 C5.2 7.4 4.4 8.4 3 8.4 C1.6 8.4 0.8 7.4 0.8 5.8 C0.8 4.2 1.4 2.6 3 2.4 Z" fill="#ecb800" stroke="#4a3a00" stroke-width="0.7"/><path d="M3 0.5 C3.9 0.5 4.3 1.2 4.2 2 L3.9 2.9 L2.1 2.9 L1.8 2 C1.7 1.2 2.1 0.5 3 0.5 Z" fill="#6e5c08" stroke="#2a2600" stroke-width="0.45"/><ellipse cx="3" cy="5.4" rx="0.9" ry="1.7" fill="#fff27a"/></svg>
<div class="cell r" style="left:163px;top:159.90px;width:39.9px;color:#1c1c1c">10008</div>
<div class="cell r" style="left:206px;top:159.90px;width:12.2px;color:#1c1c1c">10</div>
<div class="cell" style="left:222px;top:159.90px;width:40px;color:#1c1c1c">web-design</div>
<div class="cell" style="left:264.5px;top:159.90px;width:98.5px;color:#1c1c1c">Web-Design Martina Groß</div>
<div class="cell" style="left:365.5px;top:159.90px;width:74px;color:#1c1c1c">Bellerbek 98</div>
<div class="cell" style="left:442px;top:159.90px;width:27px;color:#1c1c1c">22559</div>
<div class="cell" style="left:471.5px;top:159.90px;width:103px;color:#1c1c1c">Hamburg</div>
<svg class="abs" style="left:137.8px;top:172.0px" width="5.4" height="8.1" viewBox="0 0 6 9"><path d="M3 2.4 C4.6 2.6 5.2 4.2 5.2 5.8 C5.2 7.4 4.4 8.4 3 8.4 C1.6 8.4 0.8 7.4 0.8 5.8 C0.8 4.2 1.4 2.6 3 2.4 Z" fill="#ecb800" stroke="#4a3a00" stroke-width="0.7"/><path d="M3 0.5 C3.9 0.5 4.3 1.2 4.2 2 L3.9 2.9 L2.1 2.9 L1.8 2 C1.7 1.2 2.1 0.5 3 0.5 Z" fill="#6e5c08" stroke="#2a2600" stroke-width="0.45"/><ellipse cx="3" cy="5.4" rx="0.9" ry="1.7" fill="#fff27a"/></svg>
<div class="cell r" style="left:163px;top:171.30px;width:39.9px;color:#1c1c1c">10009</div>
<div class="cell r" style="left:206px;top:171.30px;width:12.2px;color:#1c1c1c">10</div>
<div class="cell" style="left:222px;top:171.30px;width:40px;color:#1c1c1c">netzwerklö</div>
<div class="cell" style="left:264.5px;top:171.30px;width:98.5px;color:#1c1c1c">Netzwerklösungen Lutz Roth</div>
<div class="cell" style="left:365.5px;top:171.30px;width:74px;color:#1c1c1c">Dannerallee 24</div>
<div class="cell" style="left:442px;top:171.30px;width:27px;color:#1c1c1c">22119</div>
<div class="cell" style="left:471.5px;top:171.30px;width:103px;color:#1c1c1c">Hamburg</div>
<svg class="abs" style="left:137.8px;top:183.4px" width="5.4" height="8.1" viewBox="0 0 6 9"><path d="M3 2.4 C4.6 2.6 5.2 4.2 5.2 5.8 C5.2 7.4 4.4 8.4 3 8.4 C1.6 8.4 0.8 7.4 0.8 5.8 C0.8 4.2 1.4 2.6 3 2.4 Z" fill="#ecb800" stroke="#4a3a00" stroke-width="0.7"/><path d="M3 0.5 C3.9 0.5 4.3 1.2 4.2 2 L3.9 2.9 L2.1 2.9 L1.8 2 C1.7 1.2 2.1 0.5 3 0.5 Z" fill="#6e5c08" stroke="#2a2600" stroke-width="0.45"/><ellipse cx="3" cy="5.4" rx="0.9" ry="1.7" fill="#fff27a"/></svg>
<div class="cell r" style="left:163px;top:182.70px;width:39.9px;color:#1c1c1c">10010</div>
<div class="cell r" style="left:206px;top:182.70px;width:12.2px;color:#1c1c1c">10</div>
<div class="cell" style="left:222px;top:182.70px;width:40px;color:#1c1c1c">personalve</div>
<div class="cell" style="left:264.5px;top:182.70px;width:98.5px;color:#1c1c1c">Personalverwaltung Trentsch</div>
<div class="cell" style="left:365.5px;top:182.70px;width:74px;color:#1c1c1c">Bahnhofplatz 65</div>
<div class="cell" style="left:442px;top:182.70px;width:27px;color:#1c1c1c">68161</div>
<div class="cell" style="left:471.5px;top:182.70px;width:103px;color:#1c1c1c">Mannheim</div>
<svg class="abs" style="left:137.8px;top:194.8px" width="5.4" height="8.1" viewBox="0 0 6 9"><path d="M3 2.4 C4.6 2.6 5.2 4.2 5.2 5.8 C5.2 7.4 4.4 8.4 3 8.4 C1.6 8.4 0.8 7.4 0.8 5.8 C0.8 4.2 1.4 2.6 3 2.4 Z" fill="#ecb800" stroke="#4a3a00" stroke-width="0.7"/><path d="M3 0.5 C3.9 0.5 4.3 1.2 4.2 2 L3.9 2.9 L2.1 2.9 L1.8 2 C1.7 1.2 2.1 0.5 3 0.5 Z" fill="#6e5c08" stroke="#2a2600" stroke-width="0.45"/><ellipse cx="3" cy="5.4" rx="0.9" ry="1.7" fill="#fff27a"/></svg>
<div class="cell r" style="left:163px;top:194.10px;width:39.9px;color:#1c1c1c">10011</div>
<div class="cell r" style="left:206px;top:194.10px;width:12.2px;color:#1c1c1c">10</div>
<div class="cell" style="left:222px;top:194.10px;width:40px;color:#1c1c1c">design and</div>
<div class="cell" style="left:264.5px;top:194.10px;width:98.5px;color:#1c1c1c">Design and Solutions Wendt</div>
<div class="cell" style="left:365.5px;top:194.10px;width:74px;color:#1c1c1c">Innerer Heckweg 69</div>
<div class="cell" style="left:442px;top:194.10px;width:27px;color:#1c1c1c">68239</div>
<div class="cell" style="left:471.5px;top:194.10px;width:103px;color:#1c1c1c">Mannheim</div>
<svg class="abs" style="left:137.8px;top:206.2px" width="5.4" height="8.1" viewBox="0 0 6 9"><path d="M3 2.4 C4.6 2.6 5.2 4.2 5.2 5.8 C5.2 7.4 4.4 8.4 3 8.4 C1.6 8.4 0.8 7.4 0.8 5.8 C0.8 4.2 1.4 2.6 3 2.4 Z" fill="#ecb800" stroke="#4a3a00" stroke-width="0.7"/><path d="M3 0.5 C3.9 0.5 4.3 1.2 4.2 2 L3.9 2.9 L2.1 2.9 L1.8 2 C1.7 1.2 2.1 0.5 3 0.5 Z" fill="#6e5c08" stroke="#2a2600" stroke-width="0.45"/><ellipse cx="3" cy="5.4" rx="0.9" ry="1.7" fill="#fff27a"/></svg>
<div class="cell r" style="left:163px;top:205.50px;width:39.9px;color:#1c1c1c">10012</div>
<div class="cell r" style="left:206px;top:205.50px;width:12.2px;color:#1c1c1c">10</div>
<div class="cell" style="left:222px;top:205.50px;width:40px;color:#1c1c1c">internetde</div>
<div class="cell" style="left:264.5px;top:205.50px;width:98.5px;color:#1c1c1c">Internetdesign M. Fleischmann</div>
<div class="cell" style="left:365.5px;top:205.50px;width:74px;color:#1c1c1c">Jackson Street 43</div>
<div class="cell" style="left:442px;top:205.50px;width:27px;color:#1c1c1c">68309</div>
<div class="cell" style="left:471.5px;top:205.50px;width:103px;color:#1c1c1c">Mannheim</div>
<svg class="abs" style="left:137.8px;top:217.6px" width="5.4" height="8.1" viewBox="0 0 6 9"><path d="M3 2.4 C4.6 2.6 5.2 4.2 5.2 5.8 C5.2 7.4 4.4 8.4 3 8.4 C1.6 8.4 0.8 7.4 0.8 5.8 C0.8 4.2 1.4 2.6 3 2.4 Z" fill="#ecb800" stroke="#4a3a00" stroke-width="0.7"/><path d="M3 0.5 C3.9 0.5 4.3 1.2 4.2 2 L3.9 2.9 L2.1 2.9 L1.8 2 C1.7 1.2 2.1 0.5 3 0.5 Z" fill="#6e5c08" stroke="#2a2600" stroke-width="0.45"/><ellipse cx="3" cy="5.4" rx="0.9" ry="1.7" fill="#fff27a"/></svg>
<div class="cell r" style="left:163px;top:216.90px;width:39.9px;color:#1c1c1c">10013</div>
<div class="cell r" style="left:206px;top:216.90px;width:12.2px;color:#1c1c1c">10</div>
<div class="cell" style="left:222px;top:216.90px;width:40px;color:#1c1c1c">hardwarete</div>
<div class="cell" style="left:264.5px;top:216.90px;width:98.5px;color:#1c1c1c">Hardwaretechnik Zimmerman OHG</div>
<div class="cell" style="left:365.5px;top:216.90px;width:74px;color:#1c1c1c">Froescheisweg 72</div>
<div class="cell" style="left:442px;top:216.90px;width:27px;color:#1c1c1c">90449</div>
<div class="cell" style="left:471.5px;top:216.90px;width:103px;color:#1c1c1c">Nürnberg</div>
<svg class="abs" style="left:137.8px;top:229.0px" width="5.4" height="8.1" viewBox="0 0 6 9"><path d="M3 2.4 C4.6 2.6 5.2 4.2 5.2 5.8 C5.2 7.4 4.4 8.4 3 8.4 C1.6 8.4 0.8 7.4 0.8 5.8 C0.8 4.2 1.4 2.6 3 2.4 Z" fill="#ecb800" stroke="#4a3a00" stroke-width="0.7"/><path d="M3 0.5 C3.9 0.5 4.3 1.2 4.2 2 L3.9 2.9 L2.1 2.9 L1.8 2 C1.7 1.2 2.1 0.5 3 0.5 Z" fill="#6e5c08" stroke="#2a2600" stroke-width="0.45"/><ellipse cx="3" cy="5.4" rx="0.9" ry="1.7" fill="#fff27a"/></svg>
<div class="cell r" style="left:163px;top:228.30px;width:39.9px;color:#1c1c1c">10014</div>
<div class="cell r" style="left:206px;top:228.30px;width:12.2px;color:#1c1c1c">10</div>
<div class="cell" style="left:222px;top:228.30px;width:40px;color:#1c1c1c">ulbricht s</div>
<div class="cell" style="left:264.5px;top:228.30px;width:98.5px;color:#1c1c1c">Ulbricht Software</div>
<div class="cell" style="left:365.5px;top:228.30px;width:74px;color:#1c1c1c">Hochvogelring 85</div>
<div class="cell" style="left:442px;top:228.30px;width:27px;color:#1c1c1c">90471</div>
<div class="cell" style="left:471.5px;top:228.30px;width:103px;color:#1c1c1c">Nürnberg</div>
<svg class="abs" style="left:137.8px;top:240.4px" width="5.4" height="8.1" viewBox="0 0 6 9"><path d="M3 2.4 C4.6 2.6 5.2 4.2 5.2 5.8 C5.2 7.4 4.4 8.4 3 8.4 C1.6 8.4 0.8 7.4 0.8 5.8 C0.8 4.2 1.4 2.6 3 2.4 Z" fill="#ecb800" stroke="#4a3a00" stroke-width="0.7"/><path d="M3 0.5 C3.9 0.5 4.3 1.2 4.2 2 L3.9 2.9 L2.1 2.9 L1.8 2 C1.7 1.2 2.1 0.5 3 0.5 Z" fill="#6e5c08" stroke="#2a2600" stroke-width="0.45"/><ellipse cx="3" cy="5.4" rx="0.9" ry="1.7" fill="#fff27a"/></svg>
<div class="cell r" style="left:163px;top:239.70px;width:39.9px;color:#1c1c1c">10015</div>
<div class="cell r" style="left:206px;top:239.70px;width:12.2px;color:#1c1c1c">10</div>
<div class="cell" style="left:222px;top:239.70px;width:40px;color:#1c1c1c">telekommun</div>
<div class="cell" style="left:264.5px;top:239.70px;width:98.5px;color:#1c1c1c">Telekommunikationstechnik Seip</div>
<div class="cell" style="left:365.5px;top:239.70px;width:74px;color:#1c1c1c">Fasanenweg 18</div>
<div class="cell" style="left:442px;top:239.70px;width:27px;color:#1c1c1c">90480</div>
<div class="cell" style="left:471.5px;top:239.70px;width:103px;color:#1c1c1c">Nürnberg</div>
<svg class="abs" style="left:137.8px;top:251.8px" width="5.4" height="8.1" viewBox="0 0 6 9"><path d="M3 2.4 C4.6 2.6 5.2 4.2 5.2 5.8 C5.2 7.4 4.4 8.4 3 8.4 C1.6 8.4 0.8 7.4 0.8 5.8 C0.8 4.2 1.4 2.6 3 2.4 Z" fill="#ecb800" stroke="#4a3a00" stroke-width="0.7"/><path d="M3 0.5 C3.9 0.5 4.3 1.2 4.2 2 L3.9 2.9 L2.1 2.9 L1.8 2 C1.7 1.2 2.1 0.5 3 0.5 Z" fill="#6e5c08" stroke="#2a2600" stroke-width="0.45"/><ellipse cx="3" cy="5.4" rx="0.9" ry="1.7" fill="#fff27a"/></svg>
<div class="cell r" style="left:163px;top:251.10px;width:39.9px;color:#1c1c1c">10016</div>
<div class="cell r" style="left:206px;top:251.10px;width:12.2px;color:#1c1c1c">10</div>
<div class="cell" style="left:222px;top:251.10px;width:40px;color:#1c1c1c">itc nürnbe</div>
<div class="cell" style="left:264.5px;top:251.10px;width:98.5px;color:#1c1c1c">ITC Nürnberg AG</div>
<div class="cell" style="left:365.5px;top:251.10px;width:74px;color:#1c1c1c">Budapester Platz 32</div>
<div class="cell" style="left:442px;top:251.10px;width:27px;color:#1c1c1c">90459</div>
<div class="cell" style="left:471.5px;top:251.10px;width:103px;color:#1c1c1c">Nürnberg</div>
<svg class="abs" style="left:137.8px;top:263.2px" width="5.4" height="8.1" viewBox="0 0 6 9"><path d="M3 2.4 C4.6 2.6 5.2 4.2 5.2 5.8 C5.2 7.4 4.4 8.4 3 8.4 C1.6 8.4 0.8 7.4 0.8 5.8 C0.8 4.2 1.4 2.6 3 2.4 Z" fill="#ecb800" stroke="#4a3a00" stroke-width="0.7"/><path d="M3 0.5 C3.9 0.5 4.3 1.2 4.2 2 L3.9 2.9 L2.1 2.9 L1.8 2 C1.7 1.2 2.1 0.5 3 0.5 Z" fill="#6e5c08" stroke="#2a2600" stroke-width="0.45"/><ellipse cx="3" cy="5.4" rx="0.9" ry="1.7" fill="#fff27a"/></svg>
<div class="cell r" style="left:163px;top:262.50px;width:39.9px;color:#1c1c1c">10017</div>
<div class="cell r" style="left:206px;top:262.50px;width:12.2px;color:#1c1c1c">10</div>
<div class="cell" style="left:222px;top:262.50px;width:40px;color:#1c1c1c">dc - entwi</div>
<div class="cell" style="left:264.5px;top:262.50px;width:98.5px;color:#1c1c1c">DC - Entwicklung Heidner KG</div>
<div class="cell" style="left:365.5px;top:262.50px;width:74px;color:#1c1c1c">Carl-Malchin-Weg 11</div>
<div class="cell" style="left:442px;top:262.50px;width:27px;color:#1c1c1c">18055</div>
<div class="cell" style="left:471.5px;top:262.50px;width:103px;color:#1c1c1c">Rostock</div>
<svg class="abs" style="left:137.8px;top:274.6px" width="5.4" height="8.1" viewBox="0 0 6 9"><path d="M3 2.4 C4.6 2.6 5.2 4.2 5.2 5.8 C5.2 7.4 4.4 8.4 3 8.4 C1.6 8.4 0.8 7.4 0.8 5.8 C0.8 4.2 1.4 2.6 3 2.4 Z" fill="#ecb800" stroke="#4a3a00" stroke-width="0.7"/><path d="M3 0.5 C3.9 0.5 4.3 1.2 4.2 2 L3.9 2.9 L2.1 2.9 L1.8 2 C1.7 1.2 2.1 0.5 3 0.5 Z" fill="#6e5c08" stroke="#2a2600" stroke-width="0.45"/><ellipse cx="3" cy="5.4" rx="0.9" ry="1.7" fill="#fff27a"/></svg>
<div class="cell r" style="left:163px;top:273.90px;width:39.9px;color:#1c1c1c">10018</div>
<div class="cell r" style="left:206px;top:273.90px;width:12.2px;color:#1c1c1c">10</div>
<div class="cell" style="left:222px;top:273.90px;width:40px;color:#1c1c1c">vogel komm</div>
<div class="cell" style="left:264.5px;top:273.90px;width:98.5px;color:#1c1c1c">Vogel Kommunikation OHG</div>
<div class="cell" style="left:365.5px;top:273.90px;width:74px;color:#1c1c1c">Am Markt 9</div>
<div class="cell" style="left:442px;top:273.90px;width:27px;color:#1c1c1c">18119</div>
<div class="cell" style="left:471.5px;top:273.90px;width:103px;color:#1c1c1c">Rostock</div>
<svg class="abs" style="left:137.8px;top:286.0px" width="5.4" height="8.1" viewBox="0 0 6 9"><path d="M3 2.4 C4.6 2.6 5.2 4.2 5.2 5.8 C5.2 7.4 4.4 8.4 3 8.4 C1.6 8.4 0.8 7.4 0.8 5.8 C0.8 4.2 1.4 2.6 3 2.4 Z" fill="#ecb800" stroke="#4a3a00" stroke-width="0.7"/><path d="M3 0.5 C3.9 0.5 4.3 1.2 4.2 2 L3.9 2.9 L2.1 2.9 L1.8 2 C1.7 1.2 2.1 0.5 3 0.5 Z" fill="#6e5c08" stroke="#2a2600" stroke-width="0.45"/><ellipse cx="3" cy="5.4" rx="0.9" ry="1.7" fill="#fff27a"/></svg>
<div class="cell r" style="left:163px;top:285.30px;width:39.9px;color:#1c1c1c">10019</div>
<div class="cell r" style="left:206px;top:285.30px;width:12.2px;color:#1c1c1c">10</div>
<div class="cell" style="left:222px;top:285.30px;width:40px;color:#1c1c1c">computersh</div>
<div class="cell" style="left:264.5px;top:285.30px;width:98.5px;color:#1c1c1c">Computershop Fichtner</div>
<div class="cell" style="left:365.5px;top:285.30px;width:74px;color:#1c1c1c">Buchenweg 6</div>
<div class="cell" style="left:442px;top:285.30px;width:27px;color:#1c1c1c">18059</div>
<div class="cell" style="left:471.5px;top:285.30px;width:103px;color:#1c1c1c">Rostock</div>
<svg class="abs" style="left:137.8px;top:297.4px" width="5.4" height="8.1" viewBox="0 0 6 9"><path d="M3 2.4 C4.6 2.6 5.2 4.2 5.2 5.8 C5.2 7.4 4.4 8.4 3 8.4 C1.6 8.4 0.8 7.4 0.8 5.8 C0.8 4.2 1.4 2.6 3 2.4 Z" fill="#ecb800" stroke="#4a3a00" stroke-width="0.7"/><path d="M3 0.5 C3.9 0.5 4.3 1.2 4.2 2 L3.9 2.9 L2.1 2.9 L1.8 2 C1.7 1.2 2.1 0.5 3 0.5 Z" fill="#6e5c08" stroke="#2a2600" stroke-width="0.45"/><ellipse cx="3" cy="5.4" rx="0.9" ry="1.7" fill="#fff27a"/></svg>
<div class="cell r" style="left:163px;top:296.70px;width:39.9px;color:#1c1c1c">10022</div>
<div class="cell" style="left:222px;top:296.70px;width:40px;color:#1c1c1c">ausl</div>
<svg class="abs" style="left:137.8px;top:308.8px" width="5.4" height="8.1" viewBox="0 0 6 9"><path d="M3 2.4 C4.6 2.6 5.2 4.2 5.2 5.8 C5.2 7.4 4.4 8.4 3 8.4 C1.6 8.4 0.8 7.4 0.8 5.8 C0.8 4.2 1.4 2.6 3 2.4 Z" fill="#ecb800" stroke="#4a3a00" stroke-width="0.7"/><path d="M3 0.5 C3.9 0.5 4.3 1.2 4.2 2 L3.9 2.9 L2.1 2.9 L1.8 2 C1.7 1.2 2.1 0.5 3 0.5 Z" fill="#6e5c08" stroke="#2a2600" stroke-width="0.45"/><ellipse cx="3" cy="5.4" rx="0.9" ry="1.7" fill="#fff27a"/></svg>
<div class="cell r" style="left:163px;top:308.10px;width:39.9px;color:#1c1c1c">10023</div>
<div class="cell" style="left:222px;top:308.10px;width:40px;color:#1c1c1c">factor</div>
<div class="cell" style="left:264.5px;top:308.10px;width:98.5px;color:#1c1c1c">Factor</div>
<svg class="abs" style="left:137.8px;top:320.2px" width="5.4" height="8.1" viewBox="0 0 6 9"><path d="M3 2.4 C4.6 2.6 5.2 4.2 5.2 5.8 C5.2 7.4 4.4 8.4 3 8.4 C1.6 8.4 0.8 7.4 0.8 5.8 C0.8 4.2 1.4 2.6 3 2.4 Z" fill="#ecb800" stroke="#4a3a00" stroke-width="0.7"/><path d="M3 0.5 C3.9 0.5 4.3 1.2 4.2 2 L3.9 2.9 L2.1 2.9 L1.8 2 C1.7 1.2 2.1 0.5 3 0.5 Z" fill="#6e5c08" stroke="#2a2600" stroke-width="0.45"/><ellipse cx="3" cy="5.4" rx="0.9" ry="1.7" fill="#fff27a"/></svg>
<div class="cell r" style="left:163px;top:319.50px;width:39.9px;color:#1c1c1c">10024</div>
<div class="cell" style="left:222px;top:319.50px;width:40px;color:#1c1c1c">verband</div>
<div class="cell" style="left:264.5px;top:319.50px;width:98.5px;color:#1c1c1c">IT-Verband</div>
<div class="cell" style="left:365.5px;top:319.50px;width:74px;color:#1c1c1c">Weststraße 148</div>
<div class="cell" style="left:442px;top:319.50px;width:27px;color:#1c1c1c">09111</div>
<div class="cell" style="left:471.5px;top:319.50px;width:103px;color:#1c1c1c">Chemnitz</div>
<svg class="abs" style="left:137.8px;top:331.6px" width="5.4" height="8.1" viewBox="0 0 6 9"><path d="M3 2.4 C4.6 2.6 5.2 4.2 5.2 5.8 C5.2 7.4 4.4 8.4 3 8.4 C1.6 8.4 0.8 7.4 0.8 5.8 C0.8 4.2 1.4 2.6 3 2.4 Z" fill="#ecb800" stroke="#4a3a00" stroke-width="0.7"/><path d="M3 0.5 C3.9 0.5 4.3 1.2 4.2 2 L3.9 2.9 L2.1 2.9 L1.8 2 C1.7 1.2 2.1 0.5 3 0.5 Z" fill="#6e5c08" stroke="#2a2600" stroke-width="0.45"/><ellipse cx="3" cy="5.4" rx="0.9" ry="1.7" fill="#fff27a"/></svg>
<div class="cell r" style="left:163px;top:330.90px;width:39.9px;color:#1c1c1c">20002</div>
<div class="cell r" style="left:206px;top:330.90px;width:12.2px;color:#1c1c1c">20</div>
<div class="cell" style="left:222px;top:330.90px;width:40px;color:#1c1c1c">unger</div>
<div class="cell" style="left:264.5px;top:330.90px;width:98.5px;color:#1c1c1c">Unger</div>
<div class="cell" style="left:365.5px;top:330.90px;width:74px;color:#1c1c1c">Eberhardstr. 6</div>
<div class="cell" style="left:442px;top:330.90px;width:27px;color:#1c1c1c">72108</div>
<div class="cell" style="left:471.5px;top:330.90px;width:103px;color:#1c1c1c">Rottenburg am Neckar</div>
<svg class="abs" style="left:137.8px;top:343.0px" width="5.4" height="8.1" viewBox="0 0 6 9"><path d="M3 2.4 C4.6 2.6 5.2 4.2 5.2 5.8 C5.2 7.4 4.4 8.4 3 8.4 C1.6 8.4 0.8 7.4 0.8 5.8 C0.8 4.2 1.4 2.6 3 2.4 Z" fill="#ecb800" stroke="#4a3a00" stroke-width="0.7"/><path d="M3 0.5 C3.9 0.5 4.3 1.2 4.2 2 L3.9 2.9 L2.1 2.9 L1.8 2 C1.7 1.2 2.1 0.5 3 0.5 Z" fill="#6e5c08" stroke="#2a2600" stroke-width="0.45"/><ellipse cx="3" cy="5.4" rx="0.9" ry="1.7" fill="#fff27a"/></svg>
<div class="cell r" style="left:163px;top:342.30px;width:39.9px;color:#1c1c1c">20003</div>
<div class="cell r" style="left:206px;top:342.30px;width:12.2px;color:#1c1c1c">20</div>
<div class="cell" style="left:222px;top:342.30px;width:40px;color:#1c1c1c">siegel</div>
<div class="cell" style="left:264.5px;top:342.30px;width:98.5px;color:#1c1c1c">Siegel</div>
<div class="cell" style="left:365.5px;top:342.30px;width:74px;color:#1c1c1c">Kornweg 1A</div>
<div class="cell" style="left:442px;top:342.30px;width:27px;color:#1c1c1c">93049</div>
<div class="cell" style="left:471.5px;top:342.30px;width:103px;color:#1c1c1c">Regensburg</div>
<svg class="abs" style="left:137.8px;top:354.4px" width="5.4" height="8.1" viewBox="0 0 6 9"><path d="M3 2.4 C4.6 2.6 5.2 4.2 5.2 5.8 C5.2 7.4 4.4 8.4 3 8.4 C1.6 8.4 0.8 7.4 0.8 5.8 C0.8 4.2 1.4 2.6 3 2.4 Z" fill="#ecb800" stroke="#4a3a00" stroke-width="0.7"/><path d="M3 0.5 C3.9 0.5 4.3 1.2 4.2 2 L3.9 2.9 L2.1 2.9 L1.8 2 C1.7 1.2 2.1 0.5 3 0.5 Z" fill="#6e5c08" stroke="#2a2600" stroke-width="0.45"/><ellipse cx="3" cy="5.4" rx="0.9" ry="1.7" fill="#fff27a"/></svg>
<div class="cell r" style="left:163px;top:353.70px;width:39.9px;color:#1c1c1c">20004</div>
<div class="cell r" style="left:206px;top:353.70px;width:12.2px;color:#1c1c1c">20</div>
<div class="cell" style="left:222px;top:353.70px;width:40px;color:#1c1c1c">starke</div>
<div class="cell" style="left:264.5px;top:353.70px;width:98.5px;color:#1c1c1c">Starke</div>
<div class="cell" style="left:365.5px;top:353.70px;width:74px;color:#1c1c1c">Zum Vogelsang 15</div>
<div class="cell" style="left:442px;top:353.70px;width:27px;color:#1c1c1c">35781</div>
<div class="cell" style="left:471.5px;top:353.70px;width:103px;color:#1c1c1c">Weilburg</div>
<svg class="abs" style="left:137.8px;top:365.8px" width="5.4" height="8.1" viewBox="0 0 6 9"><path d="M3 2.4 C4.6 2.6 5.2 4.2 5.2 5.8 C5.2 7.4 4.4 8.4 3 8.4 C1.6 8.4 0.8 7.4 0.8 5.8 C0.8 4.2 1.4 2.6 3 2.4 Z" fill="#ecb800" stroke="#4a3a00" stroke-width="0.7"/><path d="M3 0.5 C3.9 0.5 4.3 1.2 4.2 2 L3.9 2.9 L2.1 2.9 L1.8 2 C1.7 1.2 2.1 0.5 3 0.5 Z" fill="#6e5c08" stroke="#2a2600" stroke-width="0.45"/><ellipse cx="3" cy="5.4" rx="0.9" ry="1.7" fill="#fff27a"/></svg>
<div class="cell r" style="left:163px;top:365.10px;width:39.9px;color:#1c1c1c">20005</div>
<div class="cell r" style="left:206px;top:365.10px;width:12.2px;color:#1c1c1c">20</div>
<div class="cell" style="left:222px;top:365.10px;width:40px;color:#1c1c1c">thomas</div>
<div class="cell" style="left:264.5px;top:365.10px;width:98.5px;color:#1c1c1c">Thomas</div>
<div class="cell" style="left:365.5px;top:365.10px;width:74px;color:#1c1c1c">Triftstr. 45</div>
<div class="cell" style="left:442px;top:365.10px;width:27px;color:#1c1c1c">82496</div>
<div class="cell" style="left:471.5px;top:365.10px;width:103px;color:#1c1c1c">Oberau, Loisach</div>
<svg class="abs" style="left:137.8px;top:377.2px" width="5.4" height="8.1" viewBox="0 0 6 9"><path d="M3 2.4 C4.6 2.6 5.2 4.2 5.2 5.8 C5.2 7.4 4.4 8.4 3 8.4 C1.6 8.4 0.8 7.4 0.8 5.8 C0.8 4.2 1.4 2.6 3 2.4 Z" fill="#ecb800" stroke="#4a3a00" stroke-width="0.7"/><path d="M3 0.5 C3.9 0.5 4.3 1.2 4.2 2 L3.9 2.9 L2.1 2.9 L1.8 2 C1.7 1.2 2.1 0.5 3 0.5 Z" fill="#6e5c08" stroke="#2a2600" stroke-width="0.45"/><ellipse cx="3" cy="5.4" rx="0.9" ry="1.7" fill="#fff27a"/></svg>
<div class="cell r" style="left:163px;top:376.50px;width:39.9px;color:#1c1c1c">20006</div>
<div class="cell r" style="left:206px;top:376.50px;width:12.2px;color:#1c1c1c">20</div>
<div class="cell" style="left:222px;top:376.50px;width:40px;color:#1c1c1c">uhlig</div>
<div class="cell" style="left:264.5px;top:376.50px;width:98.5px;color:#1c1c1c">Uhlig</div>
<div class="cell" style="left:365.5px;top:376.50px;width:74px;color:#1c1c1c">Trothaer Str. 3</div>
<div class="cell" style="left:442px;top:376.50px;width:27px;color:#1c1c1c">06118</div>
<div class="cell" style="left:471.5px;top:376.50px;width:103px;color:#1c1c1c">Halle</div>
<svg class="abs" style="left:137.8px;top:388.6px" width="5.4" height="8.1" viewBox="0 0 6 9"><path d="M3 2.4 C4.6 2.6 5.2 4.2 5.2 5.8 C5.2 7.4 4.4 8.4 3 8.4 C1.6 8.4 0.8 7.4 0.8 5.8 C0.8 4.2 1.4 2.6 3 2.4 Z" fill="#ecb800" stroke="#4a3a00" stroke-width="0.7"/><path d="M3 0.5 C3.9 0.5 4.3 1.2 4.2 2 L3.9 2.9 L2.1 2.9 L1.8 2 C1.7 1.2 2.1 0.5 3 0.5 Z" fill="#6e5c08" stroke="#2a2600" stroke-width="0.45"/><ellipse cx="3" cy="5.4" rx="0.9" ry="1.7" fill="#fff27a"/></svg>
<div class="cell r" style="left:163px;top:387.90px;width:39.9px;color:#1c1c1c">20007</div>
<div class="cell r" style="left:206px;top:387.90px;width:12.2px;color:#1c1c1c">20</div>
<div class="cell" style="left:222px;top:387.90px;width:40px;color:#1c1c1c">schwarz</div>
<div class="cell" style="left:264.5px;top:387.90px;width:98.5px;color:#1c1c1c">Schwarz</div>
<div class="cell" style="left:365.5px;top:387.90px;width:74px;color:#1c1c1c">Drachmenweg 13</div>
<div class="cell" style="left:442px;top:387.90px;width:27px;color:#1c1c1c">50859</div>
<div class="cell" style="left:471.5px;top:387.90px;width:103px;color:#1c1c1c">Köln</div>
<svg class="abs" style="left:137.8px;top:400.0px" width="5.4" height="8.1" viewBox="0 0 6 9"><path d="M3 2.4 C4.6 2.6 5.2 4.2 5.2 5.8 C5.2 7.4 4.4 8.4 3 8.4 C1.6 8.4 0.8 7.4 0.8 5.8 C0.8 4.2 1.4 2.6 3 2.4 Z" fill="#ecb800" stroke="#4a3a00" stroke-width="0.7"/><path d="M3 0.5 C3.9 0.5 4.3 1.2 4.2 2 L3.9 2.9 L2.1 2.9 L1.8 2 C1.7 1.2 2.1 0.5 3 0.5 Z" fill="#6e5c08" stroke="#2a2600" stroke-width="0.45"/><ellipse cx="3" cy="5.4" rx="0.9" ry="1.7" fill="#fff27a"/></svg>
<div class="cell r" style="left:163px;top:399.30px;width:39.9px;color:#1c1c1c">20008</div>
<div class="cell r" style="left:206px;top:399.30px;width:12.2px;color:#1c1c1c">20</div>
<div class="cell" style="left:222px;top:399.30px;width:40px;color:#1c1c1c">seidel</div>
<div class="cell" style="left:264.5px;top:399.30px;width:98.5px;color:#1c1c1c">Seidel</div>
<div class="cell" style="left:365.5px;top:399.30px;width:74px;color:#1c1c1c">Fichtenweg 19</div>
<div class="cell" style="left:442px;top:399.30px;width:27px;color:#1c1c1c">84533</div>
<div class="cell" style="left:471.5px;top:399.30px;width:103px;color:#1c1c1c">Marktl</div>
<svg class="abs" style="left:137.8px;top:411.4px" width="5.4" height="8.1" viewBox="0 0 6 9"><path d="M3 2.4 C4.6 2.6 5.2 4.2 5.2 5.8 C5.2 7.4 4.4 8.4 3 8.4 C1.6 8.4 0.8 7.4 0.8 5.8 C0.8 4.2 1.4 2.6 3 2.4 Z" fill="#ecb800" stroke="#4a3a00" stroke-width="0.7"/><path d="M3 0.5 C3.9 0.5 4.3 1.2 4.2 2 L3.9 2.9 L2.1 2.9 L1.8 2 C1.7 1.2 2.1 0.5 3 0.5 Z" fill="#6e5c08" stroke="#2a2600" stroke-width="0.45"/><ellipse cx="3" cy="5.4" rx="0.9" ry="1.7" fill="#fff27a"/></svg>
<div class="cell r" style="left:163px;top:410.70px;width:39.9px;color:#1c1c1c">20009</div>
<div class="cell r" style="left:206px;top:410.70px;width:12.2px;color:#1c1c1c">20</div>
<div class="cell" style="left:222px;top:410.70px;width:40px;color:#1c1c1c">thiele</div>
<div class="cell" style="left:264.5px;top:410.70px;width:98.5px;color:#1c1c1c">Thiele</div>
<div class="cell" style="left:365.5px;top:410.70px;width:74px;color:#1c1c1c">Kyreinstr. 13</div>
<div class="cell" style="left:442px;top:410.70px;width:27px;color:#1c1c1c">81371</div>
<div class="cell" style="left:471.5px;top:410.70px;width:103px;color:#1c1c1c">München</div>
<svg class="abs" style="left:137.8px;top:422.8px" width="5.4" height="8.1" viewBox="0 0 6 9"><path d="M3 2.4 C4.6 2.6 5.2 4.2 5.2 5.8 C5.2 7.4 4.4 8.4 3 8.4 C1.6 8.4 0.8 7.4 0.8 5.8 C0.8 4.2 1.4 2.6 3 2.4 Z" fill="#ecb800" stroke="#4a3a00" stroke-width="0.7"/><path d="M3 0.5 C3.9 0.5 4.3 1.2 4.2 2 L3.9 2.9 L2.1 2.9 L1.8 2 C1.7 1.2 2.1 0.5 3 0.5 Z" fill="#6e5c08" stroke="#2a2600" stroke-width="0.45"/><ellipse cx="3" cy="5.4" rx="0.9" ry="1.7" fill="#fff27a"/></svg>
<div class="cell r" style="left:163px;top:422.10px;width:39.9px;color:#1c1c1c">20010</div>
<div class="cell r" style="left:206px;top:422.10px;width:12.2px;color:#1c1c1c">20</div>
<div class="cell" style="left:222px;top:422.10px;width:40px;color:#1c1c1c">viertel</div>
<div class="cell" style="left:264.5px;top:422.10px;width:98.5px;color:#1c1c1c">Viertel</div>
<div class="cell" style="left:365.5px;top:422.10px;width:74px;color:#1c1c1c">Bachgasse 3</div>
<div class="cell" style="left:442px;top:422.10px;width:27px;color:#1c1c1c">35305</div>
<div class="cell" style="left:471.5px;top:422.10px;width:103px;color:#1c1c1c">Grünberg</div>
<svg class="abs" style="left:137.8px;top:434.2px" width="5.4" height="8.1" viewBox="0 0 6 9"><path d="M3 2.4 C4.6 2.6 5.2 4.2 5.2 5.8 C5.2 7.4 4.4 8.4 3 8.4 C1.6 8.4 0.8 7.4 0.8 5.8 C0.8 4.2 1.4 2.6 3 2.4 Z" fill="#ecb800" stroke="#4a3a00" stroke-width="0.7"/><path d="M3 0.5 C3.9 0.5 4.3 1.2 4.2 2 L3.9 2.9 L2.1 2.9 L1.8 2 C1.7 1.2 2.1 0.5 3 0.5 Z" fill="#6e5c08" stroke="#2a2600" stroke-width="0.45"/><ellipse cx="3" cy="5.4" rx="0.9" ry="1.7" fill="#fff27a"/></svg>
<div class="cell r" style="left:163px;top:433.50px;width:39.9px;color:#1c1c1c">20011</div>
<div class="cell r" style="left:206px;top:433.50px;width:12.2px;color:#1c1c1c">20</div>
<div class="cell" style="left:222px;top:433.50px;width:40px;color:#1c1c1c">vogel</div>
<div class="cell" style="left:264.5px;top:433.50px;width:98.5px;color:#1c1c1c">Vogel</div>
<div class="cell" style="left:365.5px;top:433.50px;width:74px;color:#1c1c1c">Altersheimerstr. 9A</div>
<div class="cell" style="left:442px;top:433.50px;width:27px;color:#1c1c1c">81545</div>
<div class="cell" style="left:471.5px;top:433.50px;width:103px;color:#1c1c1c">München</div>
<svg class="abs" style="left:137.8px;top:445.6px" width="5.4" height="8.1" viewBox="0 0 6 9"><path d="M3 2.4 C4.6 2.6 5.2 4.2 5.2 5.8 C5.2 7.4 4.4 8.4 3 8.4 C1.6 8.4 0.8 7.4 0.8 5.8 C0.8 4.2 1.4 2.6 3 2.4 Z" fill="#ecb800" stroke="#4a3a00" stroke-width="0.7"/><path d="M3 0.5 C3.9 0.5 4.3 1.2 4.2 2 L3.9 2.9 L2.1 2.9 L1.8 2 C1.7 1.2 2.1 0.5 3 0.5 Z" fill="#6e5c08" stroke="#2a2600" stroke-width="0.45"/><ellipse cx="3" cy="5.4" rx="0.9" ry="1.7" fill="#fff27a"/></svg>
<div class="cell r" style="left:163px;top:444.90px;width:39.9px;color:#1c1c1c">20012</div>
<div class="cell r" style="left:206px;top:444.90px;width:12.2px;color:#1c1c1c">20</div>
<div class="cell" style="left:222px;top:444.90px;width:40px;color:#1c1c1c">wächtler</div>
<div class="cell" style="left:264.5px;top:444.90px;width:98.5px;color:#1c1c1c">Wächtler</div>
<div class="cell" style="left:365.5px;top:444.90px;width:74px;color:#1c1c1c">Grasweg 14A</div>
<div class="cell" style="left:442px;top:444.90px;width:27px;color:#1c1c1c">91093</div>
<div class="cell" style="left:471.5px;top:444.90px;width:103px;color:#1c1c1c">Heßdorf</div>
<svg class="abs" style="left:137.8px;top:457.0px" width="5.4" height="8.1" viewBox="0 0 6 9"><path d="M3 2.4 C4.6 2.6 5.2 4.2 5.2 5.8 C5.2 7.4 4.4 8.4 3 8.4 C1.6 8.4 0.8 7.4 0.8 5.8 C0.8 4.2 1.4 2.6 3 2.4 Z" fill="#ecb800" stroke="#4a3a00" stroke-width="0.7"/><path d="M3 0.5 C3.9 0.5 4.3 1.2 4.2 2 L3.9 2.9 L2.1 2.9 L1.8 2 C1.7 1.2 2.1 0.5 3 0.5 Z" fill="#6e5c08" stroke="#2a2600" stroke-width="0.45"/><ellipse cx="3" cy="5.4" rx="0.9" ry="1.7" fill="#fff27a"/></svg>
<div class="cell r" style="left:163px;top:456.30px;width:39.9px;color:#1c1c1c">20013</div>
<div class="cell r" style="left:206px;top:456.30px;width:12.2px;color:#1c1c1c">20</div>
<div class="cell" style="left:222px;top:456.30px;width:40px;color:#1c1c1c">schulze</div>
<div class="cell" style="left:264.5px;top:456.30px;width:98.5px;color:#1c1c1c">Schulze</div>
<div class="cell" style="left:365.5px;top:456.30px;width:74px;color:#1c1c1c">Gerhart-Hauptmann-Ring 111</div>
<div class="cell" style="left:442px;top:456.30px;width:27px;color:#1c1c1c">81737</div>
<div class="cell" style="left:471.5px;top:456.30px;width:103px;color:#1c1c1c">München</div>
<svg class="abs" style="left:137.8px;top:468.4px" width="5.4" height="8.1" viewBox="0 0 6 9"><path d="M3 2.4 C4.6 2.6 5.2 4.2 5.2 5.8 C5.2 7.4 4.4 8.4 3 8.4 C1.6 8.4 0.8 7.4 0.8 5.8 C0.8 4.2 1.4 2.6 3 2.4 Z" fill="#ecb800" stroke="#4a3a00" stroke-width="0.7"/><path d="M3 0.5 C3.9 0.5 4.3 1.2 4.2 2 L3.9 2.9 L2.1 2.9 L1.8 2 C1.7 1.2 2.1 0.5 3 0.5 Z" fill="#6e5c08" stroke="#2a2600" stroke-width="0.45"/><ellipse cx="3" cy="5.4" rx="0.9" ry="1.7" fill="#fff27a"/></svg>
<div class="cell r" style="left:163px;top:467.70px;width:39.9px;color:#1c1c1c">20014</div>
<div class="cell r" style="left:206px;top:467.70px;width:12.2px;color:#1c1c1c">20</div>
<div class="cell" style="left:222px;top:467.70px;width:40px;color:#1c1c1c">schumann</div>
<div class="cell" style="left:264.5px;top:467.70px;width:98.5px;color:#1c1c1c">Schumann</div>
<div class="cell" style="left:365.5px;top:467.70px;width:74px;color:#1c1c1c">Walsertalstr. 15</div>
<div class="cell" style="left:442px;top:467.70px;width:27px;color:#1c1c1c">81476</div>
<div class="cell" style="left:471.5px;top:467.70px;width:103px;color:#1c1c1c">München</div>
<svg class="abs" style="left:137.8px;top:479.8px" width="5.4" height="8.1" viewBox="0 0 6 9"><path d="M3 2.4 C4.6 2.6 5.2 4.2 5.2 5.8 C5.2 7.4 4.4 8.4 3 8.4 C1.6 8.4 0.8 7.4 0.8 5.8 C0.8 4.2 1.4 2.6 3 2.4 Z" fill="#ecb800" stroke="#4a3a00" stroke-width="0.7"/><path d="M3 0.5 C3.9 0.5 4.3 1.2 4.2 2 L3.9 2.9 L2.1 2.9 L1.8 2 C1.7 1.2 2.1 0.5 3 0.5 Z" fill="#6e5c08" stroke="#2a2600" stroke-width="0.45"/><ellipse cx="3" cy="5.4" rx="0.9" ry="1.7" fill="#fff27a"/></svg>
<div class="cell r" style="left:163px;top:479.10px;width:39.9px;color:#1c1c1c">20015</div>
<div class="cell r" style="left:206px;top:479.10px;width:12.2px;color:#1c1c1c">20</div>
<div class="cell" style="left:222px;top:479.10px;width:40px;color:#1c1c1c">voigt</div>
<div class="cell" style="left:264.5px;top:479.10px;width:98.5px;color:#1c1c1c">Voigt</div>
<div class="cell" style="left:365.5px;top:479.10px;width:74px;color:#1c1c1c">Dr.-Gessler-Str. 15B</div>
<div class="cell" style="left:442px;top:479.10px;width:27px;color:#1c1c1c">93051</div>
<div class="cell" style="left:471.5px;top:479.10px;width:103px;color:#1c1c1c">Regensburg</div>
<svg class="abs" style="left:137.8px;top:491.2px" width="5.4" height="8.1" viewBox="0 0 6 9"><path d="M3 2.4 C4.6 2.6 5.2 4.2 5.2 5.8 C5.2 7.4 4.4 8.4 3 8.4 C1.6 8.4 0.8 7.4 0.8 5.8 C0.8 4.2 1.4 2.6 3 2.4 Z" fill="#ecb800" stroke="#4a3a00" stroke-width="0.7"/><path d="M3 0.5 C3.9 0.5 4.3 1.2 4.2 2 L3.9 2.9 L2.1 2.9 L1.8 2 C1.7 1.2 2.1 0.5 3 0.5 Z" fill="#6e5c08" stroke="#2a2600" stroke-width="0.45"/><ellipse cx="3" cy="5.4" rx="0.9" ry="1.7" fill="#fff27a"/></svg>
<div class="cell r" style="left:163px;top:490.50px;width:39.9px;color:#1c1c1c">20016</div>
<div class="cell r" style="left:206px;top:490.50px;width:12.2px;color:#1c1c1c">20</div>
<div class="cell" style="left:222px;top:490.50px;width:40px;color:#1c1c1c">schindler</div>
<div class="cell" style="left:264.5px;top:490.50px;width:98.5px;color:#1c1c1c">Schindler</div>
<div class="cell" style="left:365.5px;top:490.50px;width:74px;color:#1c1c1c">Agnes-Bernauer-Str. 28</div>
<div class="cell" style="left:442px;top:490.50px;width:27px;color:#1c1c1c">80687</div>
<div class="cell" style="left:471.5px;top:490.50px;width:103px;color:#1c1c1c">München</div>
<div class="btn" style="left:137.5px;width:47px">+ <u>M</u>arkieren</div>
<div class="btn" style="left:187.5px;width:54px">- <u>E</u>ntmarkieren</div>
<div class="btn" style="left:243.5px;width:62px"><u>S</u>tammdaten (F3)</div>
<div class="btn" style="left:309.5px;width:46.5px"><u>D</u>rucken (F4)</div>
<div class="btn" style="left:359.5px;width:74px">Aus<u>w</u>ertung (Return)</div>
</div></body></html>
